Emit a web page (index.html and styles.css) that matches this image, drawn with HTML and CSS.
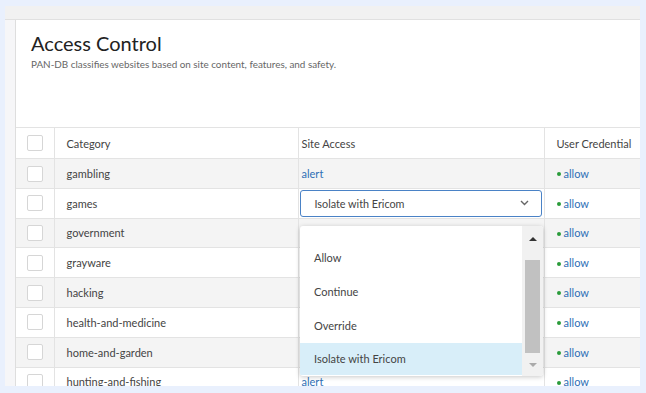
FILE: index.html
```html
<!DOCTYPE html>
<html>
<head>
<meta charset="utf-8">
<link rel="stylesheet" href="styles.css">
</head>
<body>
<div class="frame">
  <div class="topbar"></div>
  <div class="card">
    <div class="head">
      <h1 class="title">Access Control</h1>
      <p class="sub">PAN-DB classifies websites based on site content, features, and safety.</p>
    </div>
    <div class="tablewrap">
      <table class="grid">
        <colgroup><col class="c0"><col class="c1"><col class="c2"><col class="c3"></colgroup>
        <thead>
          <tr><th><span class="cb"></span></th><th>Category</th><th>Site Access</th><th>User Credential</th></tr>
        </thead>
        <tbody>
          <tr class="alt"><td><span class="cb"></span></td><td>gambling</td><td><a class="lnk">alert</a></td><td><span class="dot"></span><a class="lnk">allow</a></td></tr>
          <tr><td><span class="cb"></span></td><td>games</td><td class="selcell"><div class="select"><span>Isolate with Ericom</span><svg class="chev" width="9" height="6" viewBox="0 0 9 6"><path d="M1 1 L4.5 4.5 L8 1" fill="none" stroke="#666" stroke-width="1.4"/></svg></div></td><td><span class="dot"></span><a class="lnk">allow</a></td></tr>
          <tr class="alt"><td><span class="cb"></span></td><td>government</td><td></td><td><span class="dot"></span><a class="lnk">allow</a></td></tr>
          <tr><td><span class="cb"></span></td><td>grayware</td><td></td><td><span class="dot"></span><a class="lnk">allow</a></td></tr>
          <tr class="alt"><td><span class="cb"></span></td><td>hacking</td><td></td><td><span class="dot"></span><a class="lnk">allow</a></td></tr>
          <tr><td><span class="cb"></span></td><td>health-and-medicine</td><td></td><td><span class="dot"></span><a class="lnk">allow</a></td></tr>
          <tr class="alt"><td><span class="cb"></span></td><td>home-and-garden</td><td></td><td><span class="dot"></span><a class="lnk">allow</a></td></tr>
          <tr><td><span class="cb"></span></td><td>hunting-and-fishing</td><td><a class="lnk">alert</a></td><td><span class="dot"></span><a class="lnk">allow</a></td></tr>
        </tbody>
      </table>
      <div class="menu">
        <ul class="opts">
          <li class="opt">Allow</li>
          <li class="opt">Continue</li>
          <li class="opt">Override</li>
          <li class="opt sel">Isolate with Ericom</li>
        </ul>
        <div class="sbar">
          <svg class="arr" width="20" height="20" viewBox="0 0 20 20"><path d="M6 13 L10 9 L14 13 Z" fill="#333"/></svg>
          <div class="thumb"></div>
          <svg class="arr" width="20" height="20" viewBox="0 0 20 20"><path d="M6 8 L10 12 L14 8 Z" fill="#aaa"/></svg>
        </div>
      </div>
    </div>
  </div>
</div>
</body>
</html>
```

FILE: styles.css
```css
html, body {
  margin: 0;
  padding: 0;
}
body {
  background: #e9f0fd;
  width: 646px;
  height: 393px;
  overflow: hidden;
  font-family: Lato, "Open Sans", sans-serif;
  color: #333;
}
.frame {
  margin: 6px 0 0 5px;
  width: 635px;
  height: 380px;
  background: #f6f6f8;
  overflow: hidden;
  display: flex;
  flex-direction: column;
}
.topbar {
  height: 13px;
  background: #f1f1f1;
  border-bottom: 1px solid #e0e0e0;
  flex: none;
}
.card {
  margin-left: 10px;
  flex: 1;
  background: #fff;
  border-left: 1px solid #dedede;
  overflow: hidden;
}
.head {
  padding: 10px 0 0 15px;
  height: 107px;
  box-sizing: border-box;
}
.title {
  margin: 0;
  font-size: 20px;
  font-weight: 400;
  color: #222;
  line-height: 26px;
}
.sub {
  margin: 1px 0 0;
  font-size: 9.9px;
  color: #666;
  line-height: 14px;
}
.tablewrap {
  position: relative;
}
.grid {
  border-collapse: collapse;
  table-layout: fixed;
  width: 680px;
  font-size: 11px;
}
.c0 { width: 38px; }
.c1 { width: 244px; }
.c2 { width: 246px; }
.c3 { width: 152px; }
.grid th, .grid td {
  border-top: 1px solid #e3e3e3;
  border-right: 1px solid #e3e3e3;
  padding: 0 0 0 12px;
  text-align: left;
  font-weight: 400;
  white-space: nowrap;
  overflow: hidden;
  color: #444;
}
.grid th:first-child, .grid td:first-child {
  padding: 0;
  text-align: center;
}
.grid th { height: 30px; }
.grid td { height: 28.8px; }
.grid th:nth-child(3), .grid td:nth-child(3) { padding-left: 3px; }
.grid td:nth-child(4) { padding-left: 12px; }
.grid tr.alt td { background: #f4f4f4; }
.cb {
  display: inline-block;
  width: 14px;
  height: 14px;
  border: 1px solid #d6d6d6;
  border-radius: 2px;
  background: #fff;
  vertical-align: middle;
}
.lnk {
  color: #2f6fb6;
}
.dot {
  display: inline-block;
  width: 4px;
  height: 4px;
  border-radius: 50%;
  background: #2a9b3a;
  margin-right: 3px;
  vertical-align: middle;
  position: relative;
  top: -1px;
}
.grid td.selcell { padding-left: 1px; padding-right: 1px; }
.select {
  height: 27px;
  width: 242px;
  box-sizing: border-box;
  border: 1.5px solid #4a82c6;
  border-radius: 3px;
  display: flex;
  align-items: center;
  justify-content: space-between;
  padding: 0 12px 0 14px;
  font-size: 10.8px;
  color: #444;
  background: #fff;
}
.chev { flex: none; }
.menu {
  position: absolute;
  left: 284px;
  top: 99px;
  width: 243px;
  height: 150px;
  background: #fff;
  border-radius: 3px;
  box-shadow: 0 1px 5px rgba(0,0,0,0.22);
  display: flex;
  overflow: hidden;
}
.opts {
  list-style: none;
  margin: 0;
  padding: 15px 0 0;
  flex: 1;
  display: flex;
  flex-direction: column;
  font-size: 11px;
  color: #444;
}
.opt {
  height: 34px;
  line-height: 34px;
  padding-left: 14px;
}
.opt.sel {
  background: #d8eef9;
  height: 32px;
  line-height: 32px;
}
.sbar {
  width: 21px;
  display: flex;
  flex-direction: column;
  align-items: center;
  background: #f1f1f1;
}
.arr { flex: none; margin-top: 2px; }
.thumb {
  width: 15px;
  height: 93px;
  background: #c1c1c1;
  margin-top: 12px;
}
```
